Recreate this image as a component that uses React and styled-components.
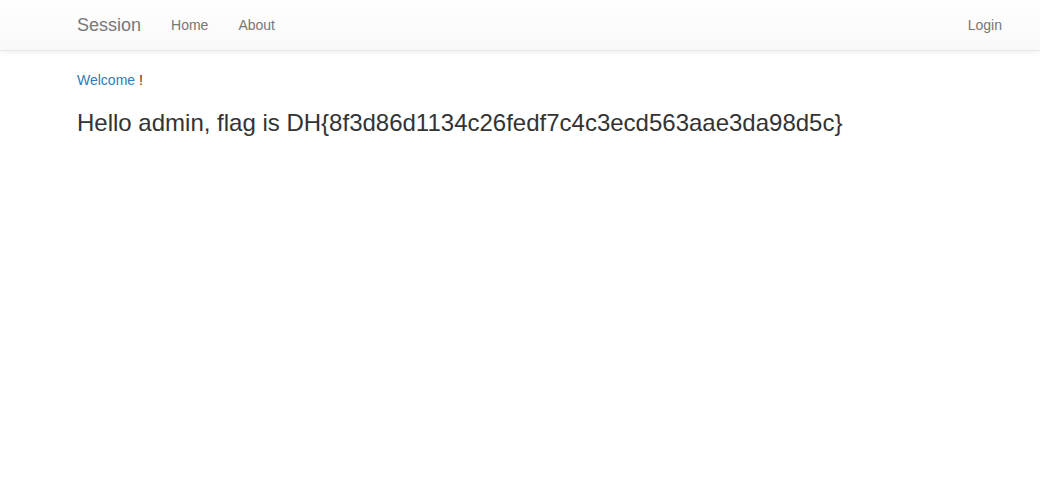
import styled, { createGlobalStyle } from 'styled-components';

const Global = createGlobalStyle`
  body {
    margin: 0;
    font-family: "Liberation Sans", Arial, sans-serif;
    font-size: 14px;
    line-height: 1.42857143;
    color: #333;
    background: #fff;
  }
`;

const Navbar = styled.nav`
  height: 50px;
  margin-bottom: 19px;
  background-image: linear-gradient(to bottom, #fff 0, #f8f8f8 100%);
  border-bottom: 1px solid #e7e7e7;
  box-shadow: inset 0 1px 0 rgba(255,255,255,.15), 0 1px 5px rgba(0,0,0,.075);
`;

const NavInner = styled.div`
  display: flex;
  align-items: center;
  height: 50px;
  padding: 0 23px 0 62px;
`;

const Brand = styled.a`
  padding: 15px;
  font-size: 18px;
  line-height: 20px;
  color: #777;
  text-decoration: none;
  text-shadow: 0 1px 0 rgba(255,255,255,.25);
`;

const NavList = styled.ul`
  display: flex;
  margin: 0;
  padding: 0;
  list-style: none;
  margin-left: ${p => (p.right ? 'auto' : '0')};
`;

const NavLink = styled.a`
  display: block;
  padding: 15px;
  line-height: 20px;
  color: #777;
  text-decoration: none;
  text-shadow: 0 1px 0 rgba(255,255,255,.25);
`;

const Content = styled.div`
  padding: 0 24px 0 77px;
`;

const Para = styled.p`
  margin: 0 0 10px;
`;

const Link = styled.a`
  color: #337ab7;
  text-decoration: none;
`;

const Heading = styled.h3`
  margin: 20px 0 10px;
  font-size: 24px;
  font-weight: 500;
  line-height: 1.1;
`;

export default function App() {
  return (
    <>
      <Global />
      <Navbar>
        <NavInner>
          <Brand href="#">Session</Brand>
          <NavList>
            <li><NavLink href="#">Home</NavLink></li>
            <li><NavLink href="#">About</NavLink></li>
          </NavList>
          <NavList right>
            <li><NavLink href="#">Login</NavLink></li>
          </NavList>
        </NavInner>
      </Navbar>
      <Content>
        <Para><Link href="#">Welcome</Link> !</Para>
        <Heading>Hello admin, flag is DH{'{'}8f3d86d1134c26fedf7c4c3ecd563aae3da98d5c{'}'}</Heading>
      </Content>
    </>
  );
}
